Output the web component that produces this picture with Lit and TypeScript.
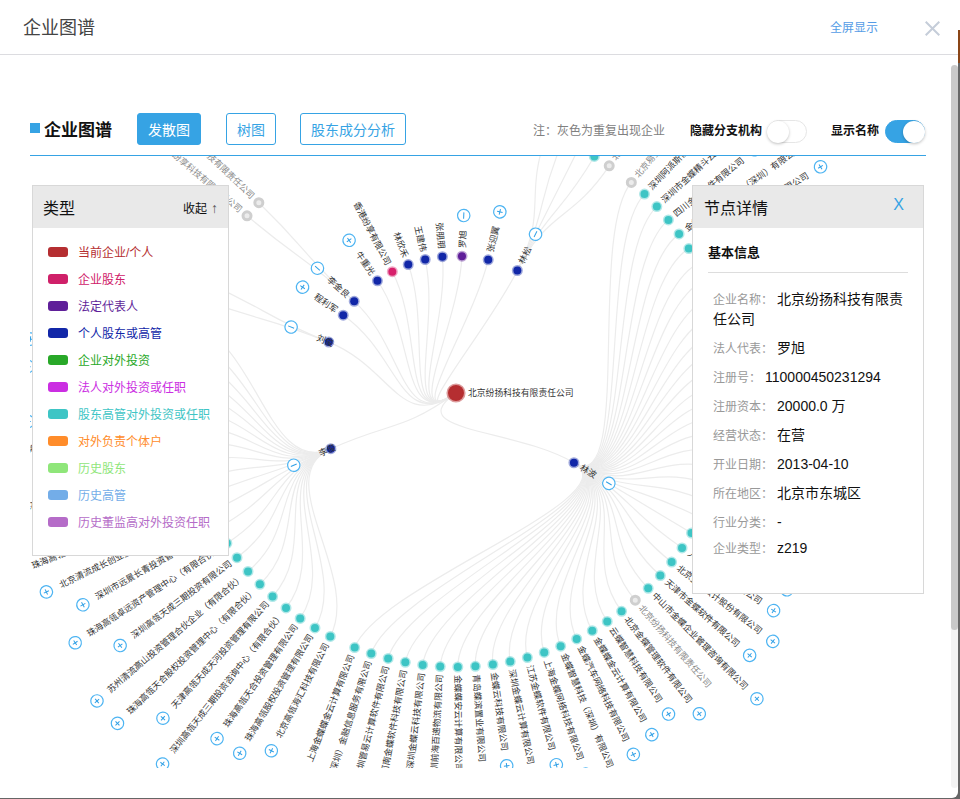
import { LitElement, html, css, svg } from 'lit';
import { customElement } from 'lit/decorators.js';

// radial tree: everything sits on a polar grid round the root node
const CX = 456;
const CY = 393;
const R1 = 137;
const R2 = 274;
const STEP = 3.68;
const ROOT_ANGLE = 235;
const CHAR_W = 8.8;

type Kid = string | number | { gray: string };
interface Person {
  a: number;
  name: string;
  kind: 'blue' | 'pink' | 'purple';
  open?: boolean; // handle shows minus
  closed?: boolean; // handle shows plus
  over?: boolean; // label drawn across the node
  start?: number;
  dir?: number;
  kids?: Kid[];
}

const LI_KIDS: Kid[] = [
  '北京高瓴海汇科技有限公司',
  '珠海高瓴股权投资管理有限公司',
  '珠海高瓴天合投资管理有限公司',
  '深圳高瓴天成三期投资咨询中心（有限合伙）',
  '天津高瓴天成天河投资管理有限公司',
  '珠海高瓴天合股权投资管理中心（有限合伙）',
  '苏州清流高山投资管理合伙企业（有限合伙）',
  '深圳高瓴天成三期投资有限公司',
  '珠海高瓴卓远资产管理中心（有限合伙）',
  '深圳市远景长青投资管理有限公司',
  '北京清流成长创业投资中心（有限合伙）',
  '珠海高瓴天成创业投资管理中心（有限合伙）',
  0,
  '珠海高瓴天成股权投资管理中心（有限合伙）',
  0,
  '珠海高瓴天成投资管理中心（有限合伙）',
  15,
  0,
  15,
  15,
  0,
  0,
];

const BO_KIDS: Kid[] = [
  '上海金蝶蝶金云计算有限公司',
  '金蝶（深圳）金融信息服务有限公司',
  '深圳管易云计算软件有限公司',
  '河南金蝶软件科技有限公司',
  '深圳金蝶云科技有限公司',
  '深圳前海百递物流有限公司',
  '金蝶蝶安云计算有限公司',
  '青岛蝶滨置业有限公司',
  '金蝶云科技有限公司',
  '深圳金蝶云计算有限公司',
  '江苏金蝶软件有限公司',
  '上海金蝶网络科技有限公司',
  '金蝶智慧科技（深圳）有限公司',
  '金蝶汽车网络科技有限公司',
  '金蝶蝶金云计算有限公司',
  '云蝶智慧科技有限公司',
  '北京金蝶管理软件有限公司',
  { gray: '北京纷扬科技有限责任公司' },
  '中山市金蝶企业管理咨询有限公司',
  '天津市金蝶软件有限公司',
  '北京金蝶云计股份有限公司',
  '人和金蝶科技有限公司',
  '金蝶软件科技有限公司',
  ...new Array(16).fill(0),
  '金蝶蝶金云计算服务股份有限公司',
  '金蝶蝶金云计算网（深圳）有限公司',
  '四川金蝶软件有限公司',
  '深圳市金蝶精斗云科技有限公司',
  '深圳阿派斯信息技术有限公司',
  { gray: '北京易金蝶科技有限责任公司' },
];

const PEOPLE: Person[] = [
  { a: 120.6, name: '林波', kind: 'blue', open: true, start: 201.7, dir: -1, kids: BO_KIDS },
  { a: 246, name: '李俊', kind: 'blue', open: true, over: true, start: 207.3, dir: 1, kids: LI_KIDS },
  { a: 291.8, name: '刘俊', kind: 'blue', open: true, over: true, start: 290.2, dir: 1, kids: [0, 0] },
  { a: 304.6, name: '程利军', kind: 'blue', closed: true },
  {
    a: 312,
    name: '李金良',
    kind: 'blue',
    open: true,
    start: 310.3,
    dir: 1,
    kids: [{ gray: '北京纷享科技有限责任公司' }, { gray: '北京纷扬科技有限责任公司' }],
  },
  { a: 325, name: '牛重光', kind: 'blue', closed: true },
  { a: 332.3, name: '香港纷享有限公司', kind: 'pink' },
  { a: 339.6, name: '林欣禾', kind: 'blue' },
  { a: 347, name: '王建伟', kind: 'blue' },
  { a: 354.3, name: '张朋朋', kind: 'blue' },
  { a: 2.5, name: '罗旭', kind: 'purple', open: true },
  { a: 13.6, name: '张迎翼', kind: 'blue', closed: true },
  {
    a: 26.6,
    name: '林松',
    kind: 'blue',
    open: true,
    start: 34,
    dir: -1,
    kids: [{ gray: '北京纷扬科技有限责任公司' }, '金蝶云科技有限公司', 0, 0, 0],
  },
];

const LEGEND = [
  ['当前企业/个人', '#b52e31'],
  ['企业股东', '#cf2069'],
  ['法定代表人', '#5f1f99'],
  ['个人股东或高管', '#1227a8'],
  ['企业对外投资', '#28a828'],
  ['法人对外投资或任职', '#cb2ee2'],
  ['股东高管对外投资或任职', '#3ec5c5'],
  ['对外负责个体户', '#ff8c2a'],
  ['历史股东', '#8fe67a'],
  ['历史高管', '#73ade8'],
  ['历史董监高对外投资任职', '#b56cc8'],
];

const DETAILS = [
  ['企业名称', '北京纷扬科技有限责任公司'],
  ['法人代表', '罗旭'],
  ['注册号', '110000450231294'],
  ['注册资本', '20000.0 万'],
  ['经营状态', '在营'],
  ['开业日期', '2013-04-10'],
  ['所在地区', '北京市东城区'],
  ['行业分类', '-'],
  ['企业类型', 'z219'],
];

const polar = (r: number, a: number) => {
  const t = (a * Math.PI) / 180;
  return [CX + r * Math.sin(t), CY - r * Math.cos(t)];
};

const link = (r0: number, a0: number, r1: number, a1: number) => {
  const m = (r0 + r1) / 2;
  const [x0, y0] = polar(r0, a0);
  const [x1, y1] = polar(m, a0);
  const [x2, y2] = polar(m, a1);
  const [x3, y3] = polar(r1, a1);
  return `M${x0} ${y0}C${x1} ${y1} ${x2} ${y2} ${x3} ${y3}`;
};

@customElement('tree-graph')
export class TreeGraph extends LitElement {
  static styles = css`
    :host {
      display: block;
    }
    svg {
      display: block;
      font-family: 'Noto Sans CJK SC', 'Liberation Sans', sans-serif;
      font-size: 8.8px;
    }
    .edge {
      fill: none;
      stroke: #ececec;
      stroke-width: 1.2;
    }
    .label {
      fill: #333;
    }
    .label.gray {
      fill: #888;
    }
    .node {
      stroke-width: 3;
      stroke-opacity: 0.4;
    }
    .blue {
      fill: #1227a8;
      stroke: #1227a8;
    }
    .pink {
      fill: #d8206c;
      stroke: #d8206c;
    }
    .purple {
      fill: #5f1f99;
      stroke: #5f1f99;
    }
    .teal {
      fill: #3ec5c5;
      stroke: #3ec5c5;
    }
    .grayNode {
      fill: #ececec;
      stroke: #cfcfcf;
      stroke-opacity: 1;
      stroke-width: 3;
    }
    .root {
      fill: #b52e31;
      stroke: #b52e31;
      stroke-width: 3.2;
      stroke-opacity: 0.48;
    }
    .handle {
      fill: #fff;
      stroke: #4db4f2;
      stroke-width: 1.2;
    }
    .mark {
      stroke: #2e9fe6;
      stroke-width: 1;
    }
  `;

  private _label(r: number, a: number, text: string, gray = false, over = false) {
    const [x, y] = polar(r, a);
    const right = a < 180;
    const off = over ? 5 : right ? 8 : -8;
    return svg`<text
      class="label ${gray ? 'gray' : ''}"
      transform="translate(${x} ${y}) rotate(${right ? a - 90 : a + 90})"
      x=${off}
      dy="0.35em"
      text-anchor=${right ? 'start' : 'end'}
    >${text}</text>`;
  }

  private _handle(r: number, a: number, open: boolean) {
    const [x, y] = polar(r, a);
    return svg`<g transform="translate(${x} ${y}) rotate(${a - 90})">
      <circle class="handle" r="6.2"></circle>
      ${open
        ? svg`<line class="mark" x1="-3.2" x2="3.2"></line>`
        : svg`<line class="mark" x1="-2.8" x2="2.8"></line><line class="mark" y1="-2.8" y2="2.8"></line>`}
    </g>`;
  }

  private _dot(r: number, a: number, cls: string, size = 4) {
    const [x, y] = polar(r, a);
    return svg`<circle class="node ${cls}" cx=${x} cy=${y} r=${size}></circle>`;
  }

  private _kids(p: Person) {
    return (p.kids ?? []).map((kid, i) => {
      const a = (p.start as number) + (p.dir as number) * STEP * i;
      const gray = typeof kid === 'object';
      const name = typeof kid === 'string' ? kid : gray ? (kid as { gray: string }).gray : '';
      const chars = typeof kid === 'number' ? kid : gray ? 0 : name.length;
      return {
        a,
        edge: svg`<path class="edge" d=${link(R1, p.a, R2, a)}></path>`,
        top: svg`
          ${this._dot(R2, a, gray ? 'grayNode' : 'teal')}
          ${name ? this._label(R2, a, name, gray) : ''}
          ${chars ? this._handle(R2 + 23 + CHAR_W * chars, a, false) : ''}
        `,
      };
    });
  }

  render() {
    const kids = PEOPLE.flatMap((p) => this._kids(p));
    return html`<svg width="896" height="612" viewBox="30 156 896 612">
      ${PEOPLE.map((p) => svg`<path class="edge" d=${link(0, ROOT_ANGLE, R1, p.a)}></path>`)}
      ${kids.map((k) => k.edge)}
      ${PEOPLE.map(
        (p) => svg`
          ${this._dot(R1, p.a, p.kind)}
          ${this._label(R1, p.a, p.name, false, p.over)}
          ${p.open || p.closed
            ? this._handle(R1 + 23 + CHAR_W * p.name.length, p.a, !!p.open)
            : ''}
        `,
      )}
      ${kids.map((k) => k.top)}
      <circle class="root" cx=${CX} cy=${CY} r="8"></circle>
      <text class="label" x="468" y=${CY} dy="0.35em">北京纷扬科技有限责任公司</text>
    </svg>`;
  }
}

@customElement('app-root')
export class AppRoot extends LitElement {
  static styles = css`
    :host {
      display: flex;
      width: 960px;
      height: 799px;
      background: #666;
      overflow: hidden;
      font-family: 'Liberation Sans', 'Noto Sans CJK SC', sans-serif;
    }
    .modal {
      width: 958px;
      height: 798px;
      background: #fff;
      border-bottom-right-radius: 6px;
      display: flex;
      flex-direction: column;
    }
    .side {
      flex: 1;
      display: flex;
      flex-direction: column;
    }
    .side .a {
      height: 30px;
      background: #fff;
    }
    .side .b {
      height: 33px;
      background: #8a4517;
    }
    .head {
      height: 54px;
      flex: none;
      border-bottom: 1px solid #dcdce0;
      display: flex;
      align-items: center;
      padding: 0 18px 0 23px;
      box-sizing: content-box;
    }
    .head h1 {
      margin: -2px 0 0;
      font-size: 18px;
      font-weight: 400;
      color: #444;
    }
    .full {
      margin-left: auto;
      margin-right: 47px;
      margin-top: -2px;
      font-size: 12px;
      color: #559ce6;
    }
    .close {
      display: block;
      margin-top: 2px;
    }
    .body {
      flex: 1;
      display: flex;
      min-height: 0;
    }
    .content {
      flex: 1;
      padding: 58px 25px 0 30px;
    }
    .scroll {
      width: 7px;
      margin: 10px 0;
      background: #f3f3f3;
      border-radius: 4px;
    }
    .thumb {
      height: 565px;
      background: #c9c9c9;
      border-radius: 4px;
    }
    .bar {
      height: 43px;
      box-sizing: border-box;
      padding-bottom: 10px;
      border-bottom: 1px solid #36a3e4;
      display: flex;
      align-items: center;
    }
    .mark {
      width: 10px;
      height: 10px;
      margin: -2px 4px 0 0;
      background: #36a3e4;
    }
    .bar h2 {
      margin: -2px 25px 0 0;
      font-size: 17px;
      font-weight: 700;
      color: #111;
    }
    .btn {
      box-sizing: border-box;
      height: 32px;
      padding: 0 10px;
      margin-right: 24px;
      border: 1px solid #36a3e4;
      border-radius: 3px;
      background: #fff;
      color: #36a3e4;
      font: inherit;
      font-size: 14px;
    }
    .btn.on {
      background: #36a3e4;
      color: #fff;
      width: 64px;
      margin-right: 25px;
    }
    .opts {
      margin-left: auto;
      display: flex;
      align-items: center;
    }
    .note {
      font-size: 12px;
      color: #808080;
      margin-right: 25px;
    }
    .opt {
      font-size: 12px;
      font-weight: 700;
      color: #111;
      margin-right: 5px;
    }
    .sw {
      box-sizing: border-box;
      width: 40px;
      height: 23px;
      margin: 5px 24px 0 0;
      border: 1px solid #e6e6e6;
      border-radius: 12px;
      background: #fff;
      display: flex;
    }
    .sw i {
      display: block;
      width: 22px;
      height: 22px;
      margin: -0.5px 0 0 -1px;
      background: #fff;
      border-radius: 50%;
      box-shadow: 0 1px 3px rgba(0, 0, 0, 0.25);
    }
    .sw.on {
      background: #36a3e4;
      border-color: #36a3e4;
      justify-content: flex-end;
      margin-right: 1px;
      margin-left: 1px;
    }
    .sw.on i {
      margin: -0.5px -1px 0 0;
    }
    .chart {
      position: relative;
      height: 612px;
    }
    .panel {
      position: absolute;
      top: 29px;
      box-sizing: border-box;
      background: #fff;
      border: 1px solid #d8d8d8;
      color: #111;
    }
    .legend {
      left: 2px;
      width: 197px;
      height: 371px;
    }
    .detail {
      left: 662px;
      width: 232px;
      height: 409px;
    }
    .ph {
      height: 42px;
      background: #e9e9e9;
      display: flex;
      align-items: center;
      justify-content: space-between;
      padding: 0 10px;
      font-size: 16px;
    }
    .detail .ph {
      padding: 0 19px 0 11px;
    }
    .fold {
      font-size: 12px;
      display: flex;
      gap: 4px;
      align-items: center;
      margin-top: 1px;
    }
    .fold span {
      color: #555;
      font-size: 14px;
    }
    .x {
      color: #36a3e4;
      margin-top: -4px;
    }
    .list {
      padding: 10px 0 0 15px;
    }
    .item {
      height: 27px;
      display: flex;
      align-items: center;
      gap: 10px;
      font-size: 12px;
    }
    .sq {
      width: 20px;
      height: 10px;
      border-radius: 3px;
    }
    .info {
      padding: 15px 15px 0;
    }
    .info h3 {
      margin: 0;
      height: 29px;
      line-height: 20px;
      font-size: 13px;
      border-bottom: 1px solid #ddd;
    }
    .rows {
      padding: 16px 0 0 5px;
    }
    .row {
      margin-bottom: 9px;
      line-height: 20px;
      font-size: 14px;
    }
    .row:last-child {
      margin-top: -3px;
    }
    .row .k {
      font-size: 12px;
      line-height: 1;
      color: #999;
      margin-right: 4px;
    }
  `;

  render() {
    return html`
      <div class="modal">
        <header class="head">
          <h1>企业图谱</h1>
          <span class="full">全屏显示</span>
          <svg class="close" width="15" height="15" viewBox="0 0 15 15">
            <path d="M.7.7l13.6 13.6M14.3.7L.7 14.3" stroke="#c5cdd9" stroke-width="2" fill="none" />
          </svg>
        </header>
        <div class="body">
          <div class="content">
            <div class="bar">
              <span class="mark"></span>
              <h2>企业图谱</h2>
              <button class="btn on">发散图</button>
              <button class="btn">树图</button>
              <button class="btn">股东成分分析</button>
              <div class="opts">
                <span class="note">注：灰色为重复出现企业</span>
                <span class="opt">隐藏分支机构</span>
                <span class="sw"><i></i></span>
                <span class="opt">显示名称</span>
                <span class="sw on"><i></i></span>
              </div>
            </div>
            <div class="chart">
              <tree-graph></tree-graph>
              <aside class="panel legend">
                <div class="ph">类型 <span class="fold">收起 <span>↑</span></span></div>
                <div class="list">
                  ${LEGEND.map(
                    ([name, color]) => html`<div class="item" style="color:${color}">
                      <span class="sq" style="background:${color}"></span>${name}
                    </div>`,
                  )}
                </div>
              </aside>
              <aside class="panel detail">
                <div class="ph">节点详情 <span class="x">X</span></div>
                <div class="info">
                  <h3>基本信息</h3>
                  <div class="rows">
                    ${DETAILS.map(
                      ([k, v]) => html`<div class="row"><span class="k">${k}：</span>${v}</div>`,
                    )}
                  </div>
                </div>
              </aside>
            </div>
          </div>
          <div class="scroll"><div class="thumb"></div></div>
        </div>
      </div>
      <div class="side"><div class="a"></div><div class="b"></div></div>
    `;
  }
}
